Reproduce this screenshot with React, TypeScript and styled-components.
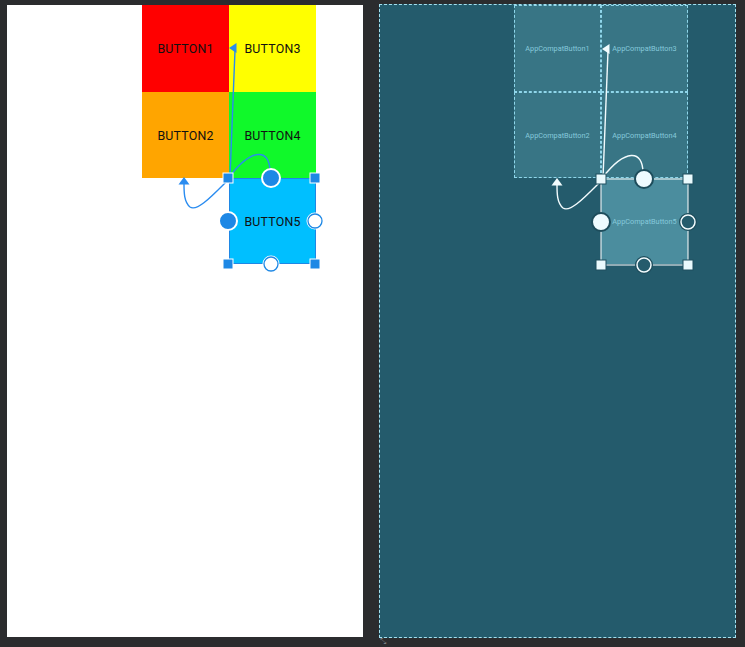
import React from "react";
import styled, { createGlobalStyle } from "styled-components";

const Global = createGlobalStyle`
  html, body { margin: 0; padding: 0; background: #2b2c2e; overflow: hidden; }
  body { width: 745px; height: 647px; font-family: Roboto, "Liberation Sans", sans-serif; }
`;

const Stage = styled.div`
  display: flex;
  align-items: flex-start;
  gap: 16px;
  padding-left: 7px;
  width: 745px;
  height: 647px;
  box-sizing: border-box;
  position: relative;
`;

const Screen = styled.div<{ $blue?: boolean }>`
  position: relative;
  box-sizing: border-box;
  width: ${(p) => (p.$blue ? 357 : 356)}px;
  height: ${(p) => (p.$blue ? 634 : 632)}px;
  margin-top: ${(p) => (p.$blue ? 4 : 5)}px;
  background: ${(p) => (p.$blue ? "#245b6c" : "#ffffff")};
  border: ${(p) => (p.$blue ? "1px dashed #a4e1f0" : "none")};
  padding-left: ${(p) => (p.$blue ? 134 : 135)}px;
  padding-top: 0;
`;

const Grid = styled.div`
  display: grid;
  grid-template-columns: 87px 87px;
  grid-template-rows: 87px 86px 86px;
`;

const Btn = styled.div<{ $bg: string; $border?: string; $dashed?: boolean; $blue?: boolean }>`
  flex: 1;
  display: flex;
  align-items: center;
  justify-content: center;
  box-sizing: border-box;
  background: ${(p) => p.$bg};
  border: ${(p) => (p.$border ? `1px ${p.$dashed ? "dashed" : "solid"} ${p.$border}` : "none")};
  color: ${(p) => (p.$blue ? "#86c9db" : "#111")};
  font-family: Roboto, "Liberation Sans", sans-serif;
  font-size: ${(p) => (p.$blue ? "7.3px" : "12.4px")};
  letter-spacing: ${(p) => (p.$blue ? "0" : "0.2px")};
`;

const Cell = styled.div<{ $col: number; $row: number }>`
  grid-column: ${(p) => p.$col};
  grid-row: ${(p) => p.$row};
  display: flex;
`;

const Overlay = styled.svg`
  position: absolute;
  left: 0;
  top: 0;
  pointer-events: none;
  overflow: visible;
`;

const Resize = styled.span`
  position: absolute;
  left: 380px;
  top: 637px;
  color: #7a7c80;
  font-size: 8px;
  line-height: 9px;
  font-family: "DejaVu Sans", sans-serif;
`;

type Kind = "design" | "blue";

const buttons = [
  { n: 1, col: 1, row: 1, bg: "#ff0000" },
  { n: 3, col: 2, row: 1, bg: "#ffff00" },
  { n: 2, col: 1, row: 2, bg: "#ffa500" },
  { n: 4, col: 2, row: 2, bg: "#10f92a" },
  { n: 5, col: 2, row: 3, bg: "#00bfff" },
];

function Handles({ kind }: { kind: Kind }) {
  const blue = kind === "blue";
  const line = blue ? "#f2fbfd" : "#2a8cf0";
  const squareFill = blue ? "#eafafd" : "#1e88e5";
  const squareStroke = blue ? "#1e4f5e" : "#ffffff";
  const solidFill = blue ? "#eefbff" : "#1e88e5";
  const solidStroke = blue ? "#1d4c5b" : "#ffffff";
  const openFill = blue ? "#245b6c" : "#ffffff";
  const openStroke = blue ? "#f2fbfd" : "#1e88e5";
  const squares = [
    [228, 178],
    [315, 178],
    [228, 264],
    [315, 264],
  ];
  return (
    <g>
      <path d="M228 180 C 212 196, 197 212, 190 207 C 184 202, 184 192, 184 184" fill="none" stroke={line} strokeWidth={1.4} />
      <polygon points="184,177 178.5,184.5 189.5,184.5" fill={line} />
      <path d="M270 172 C 270 148, 252 148, 230 176" fill="none" stroke={line} strokeWidth={1.4} />
      <path d="M230 177 L 235 50" fill="none" stroke={line} strokeWidth={1.4} />
      <polygon points="229,48 236.5,43 236.5,53" fill={line} />
      {blue && (
        <g>
          <line x1={228} y1={178} x2={315} y2={178} stroke="#ffffff" strokeWidth={1} />
          <line x1={228} y1={264} x2={315} y2={264} stroke="#ffffff" strokeWidth={1} />
          <line x1={228} y1={178} x2={228} y2={264} stroke="#ffffff" strokeWidth={1} />
          <line x1={315} y1={178} x2={315} y2={264} stroke="#ffffff" strokeWidth={1} />
        </g>
      )}
      {squares.map(([x, y]) => (
        <rect key={`${x}-${y}`} x={x - 5} y={y - 5} width={10} height={10} fill={squareFill} stroke={squareStroke} strokeWidth={1} />
      ))}
      <circle cx={271} cy={178} r={9} fill={solidFill} stroke={solidStroke} strokeWidth={2} />
      <circle cx={228} cy={221} r={9} fill={solidFill} stroke={solidStroke} strokeWidth={2} />
      {blue ? (
        <g>
          <circle cx={315} cy={221} r={9} fill="#1d4c5b" />
          <circle cx={315} cy={221} r={7} fill={openFill} stroke={openStroke} strokeWidth={1.5} />
          <circle cx={271} cy={264} r={9} fill="#1d4c5b" />
          <circle cx={271} cy={264} r={7} fill={openFill} stroke={openStroke} strokeWidth={1.5} />
        </g>
      ) : (
        <g>
          <circle cx={315} cy={221} r={8.5} fill="#ffffff" />
          <circle cx={315} cy={221} r={7} fill={openFill} stroke={openStroke} strokeWidth={1.3} />
          <circle cx={271} cy={264} r={8.5} fill="#ffffff" />
          <circle cx={271} cy={264} r={7} fill={openFill} stroke={openStroke} strokeWidth={1.3} />
        </g>
      )}
    </g>
  );
}

function Layout({ kind }: { kind: Kind }) {
  const blue = kind === "blue";
  return (
    <Screen $blue={blue}>
      <Grid>
        {buttons.map((b) => (
          <Cell key={b.n} $col={b.col} $row={b.row}>
            <Btn
              $blue={blue}
              $bg={blue ? (b.n === 5 ? "#4b8d9e" : "#387585") : b.bg}
              $border={blue ? (b.n === 5 ? undefined : "#8fd6ea") : b.n === 5 ? "#1e88e5" : undefined}
              $dashed={blue}
            >
              {blue ? `AppCompatButton${b.n}` : `BUTTON${b.n}`}
            </Btn>
          </Cell>
        ))}
      </Grid>
      <Overlay
        width={blue ? 357 : 356}
        height={blue ? 634 : 632}
        viewBox={blue ? "7 4 357 634" : "7 5 356 632"}
      >
        <Handles kind={kind} />
      </Overlay>
    </Screen>
  );
}

export default function App() {
  return (
    <>
      <Global />
      <Stage>
        <Layout kind="design" />
        <Layout kind="blue" />
        <Resize>⤡</Resize>
      </Stage>
    </>
  );
}
